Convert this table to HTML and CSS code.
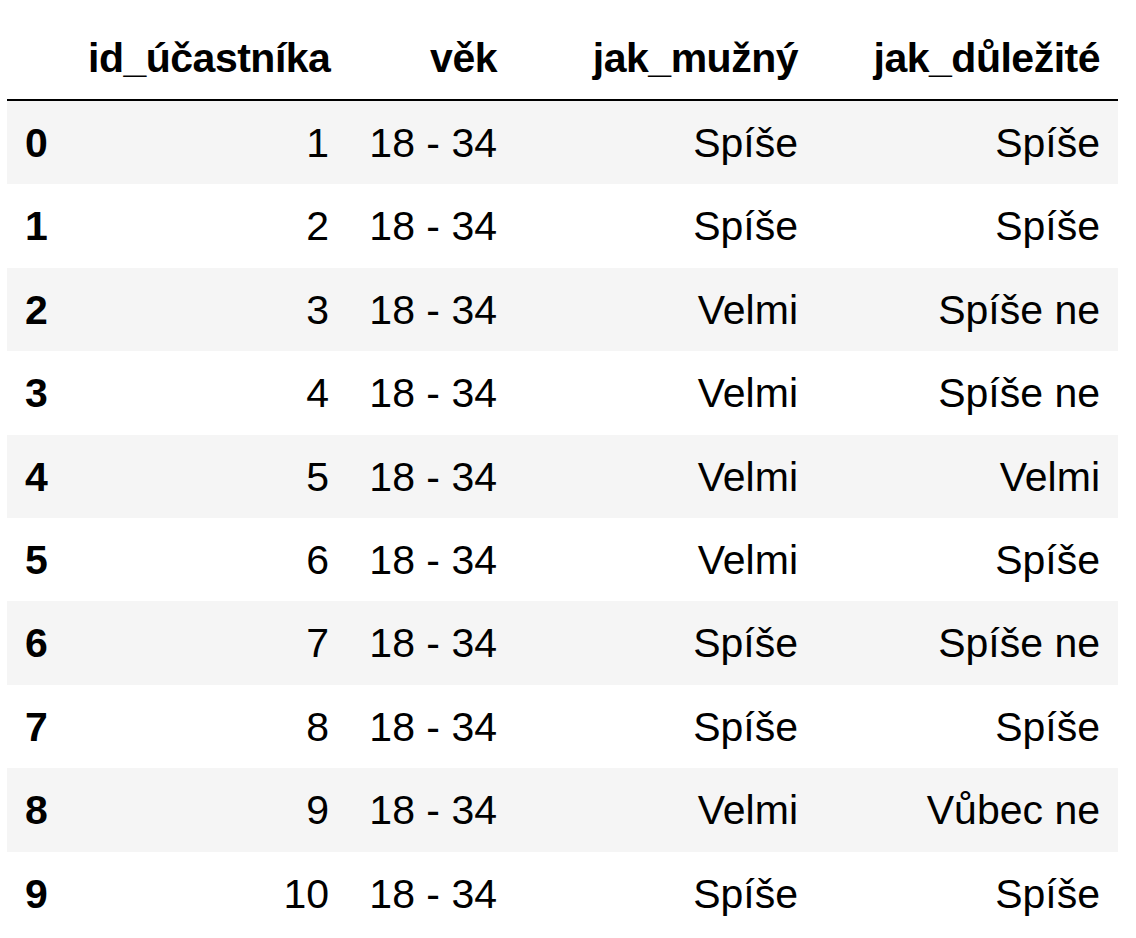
FILE: index.html
```html
<!DOCTYPE html>
<html lang="cs">
<head>
<meta charset="utf-8">
<title>DataFrame</title>
<link rel="stylesheet" href="styles.css">
</head>
<body>
<table class="dataframe">
  <colgroup>
    <col class="c-idx">
    <col class="c-id">
    <col class="c-vek">
    <col class="c-muz">
    <col class="c-dul">
  </colgroup>
  <thead>
    <tr>
      <th class="blank"></th>
      <th>id_účastníka</th>
      <th>věk</th>
      <th>jak_mužný</th>
      <th>jak_důležité</th>
    </tr>
  </thead>
  <tbody>
    <tr><th>0</th><td>1</td><td>18 - 34</td><td>Spíše</td><td>Spíše</td></tr>
    <tr><th>1</th><td>2</td><td>18 - 34</td><td>Spíše</td><td>Spíše</td></tr>
    <tr><th>2</th><td>3</td><td>18 - 34</td><td>Velmi</td><td>Spíše ne</td></tr>
    <tr><th>3</th><td>4</td><td>18 - 34</td><td>Velmi</td><td>Spíše ne</td></tr>
    <tr><th>4</th><td>5</td><td>18 - 34</td><td>Velmi</td><td>Velmi</td></tr>
    <tr><th>5</th><td>6</td><td>18 - 34</td><td>Velmi</td><td>Spíše</td></tr>
    <tr><th>6</th><td>7</td><td>18 - 34</td><td>Spíše</td><td>Spíše ne</td></tr>
    <tr><th>7</th><td>8</td><td>18 - 34</td><td>Spíše</td><td>Spíše</td></tr>
    <tr><th>8</th><td>9</td><td>18 - 34</td><td>Velmi</td><td>Vůbec ne</td></tr>
    <tr><th>9</th><td>10</td><td>18 - 34</td><td>Spíše</td><td>Spíše</td></tr>
  </tbody>
</table>
</body>
</html>
```

FILE: styles.css
```css
html, body {
  background: #ffffff;
}
body {
  margin: 15px 0 0 7px;
  font-family: "Liberation Sans", Arial, Helvetica, sans-serif;
  color: #000000;
}
.dataframe {
  border-collapse: collapse;
  border-spacing: 0;
  table-layout: fixed;
  width: 1111px;
  font-size: 41px;
  line-height: 47.4px;
}
.c-idx { width: 63px; }
.c-id { width: 277px; }
.c-vek { width: 168px; }
.c-muz { width: 301px; }
.c-dul { width: 302px; }

.dataframe th,
.dataframe td {
  padding: 19px 18px 17px 18px;
  text-align: right;
  vertical-align: middle;
  white-space: nowrap;
  border: none;
}
.dataframe thead th {
  font-weight: bold;
  vertical-align: bottom;
  letter-spacing: -0.5px;
  padding-top: 19.5px;
  padding-bottom: 17px;
  border-bottom: 2px solid #000000;
}
.dataframe tbody th {
  font-weight: bold;
  text-align: left;
}
.dataframe td {
  font-weight: normal;
}
.dataframe tbody tr:nth-child(odd) {
  background: #f5f5f5;
}
```
